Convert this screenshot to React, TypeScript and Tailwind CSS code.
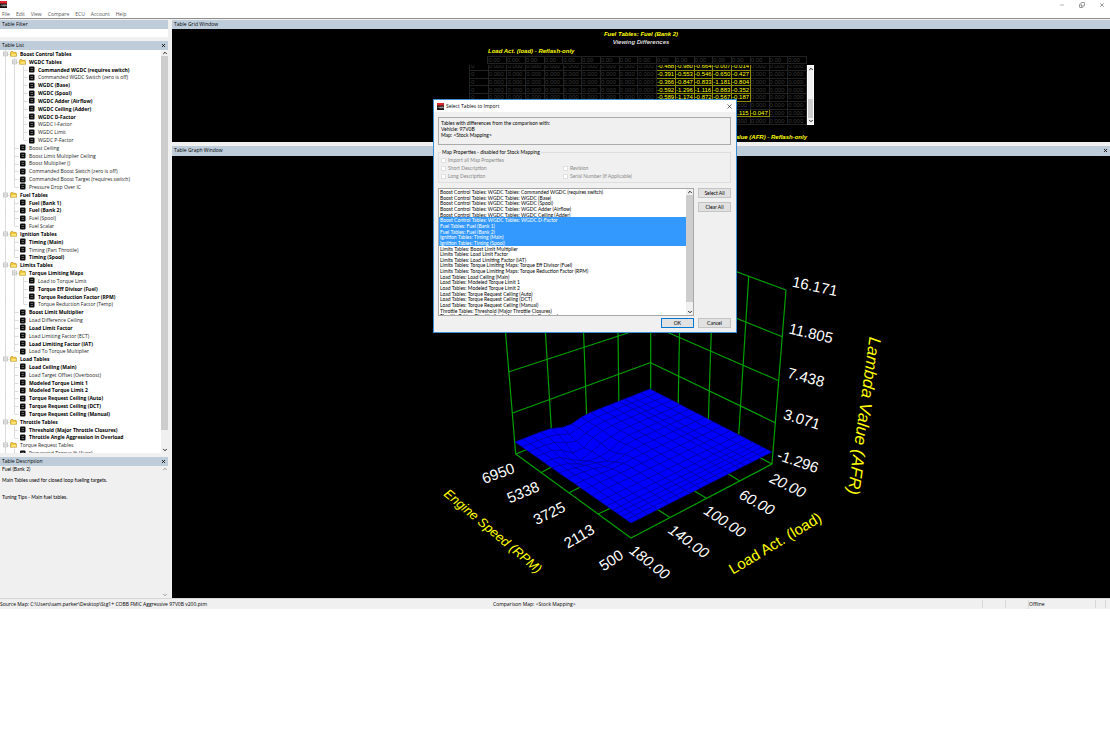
import React, { useState } from 'react';
import { ChevronDown, ChevronUp, Copy, Minus, X } from 'lucide-react';

type TreeRow = { level: number; label: string; bold?: boolean; folder?: boolean };

const folder = (level: number, label: string, bold = true): TreeRow => ({ level, label, bold, folder: true });
const item = (level: number, label: string): TreeRow => ({ level, label });
const changed = (level: number, label: string): TreeRow => ({ level, label, bold: true });

const TREE: TreeRow[] = [
  folder(0, 'Boost Control Tables'),
  folder(1, 'WGDC Tables'),
  changed(2, 'Commanded WGDC (requires switch)'),
  item(2, 'Commanded WGDC Switch (zero is off)'),
  changed(2, 'WGDC (Base)'),
  changed(2, 'WGDC (Spool)'),
  changed(2, 'WGDC Adder (Airflow)'),
  changed(2, 'WGDC Ceiling (Adder)'),
  changed(2, 'WGDC D-Factor'),
  item(2, 'WGDC I-Factor'),
  item(2, 'WGDC Limit'),
  item(2, 'WGDC P-Factor'),
  item(1, 'Boost Ceiling'),
  item(1, 'Boost Limit Multiplier Ceiling'),
  item(1, 'Boost Multiplier ()'),
  item(1, 'Commanded Boost Switch (zero is off)'),
  item(1, 'Commanded Boost Target (requires switch)'),
  item(1, 'Pressure Drop Over IC'),
  folder(0, 'Fuel Tables'),
  changed(1, 'Fuel (Bank 1)'),
  changed(1, 'Fuel (Bank 2)'),
  item(1, 'Fuel (Spool)'),
  item(1, 'Fuel Scalar'),
  folder(0, 'Ignition Tables'),
  changed(1, 'Timing (Main)'),
  item(1, 'Timing (Part Throttle)'),
  changed(1, 'Timing (Spool)'),
  folder(0, 'Limits Tables'),
  folder(1, 'Torque Limiting Maps'),
  item(2, 'Load to Torque Limit'),
  changed(2, 'Torque Eff Divisor (Fuel)'),
  changed(2, 'Torque Reduction Factor (RPM)'),
  item(2, 'Torque Reduction Factor (Temp)'),
  changed(1, 'Boost Limit Multiplier'),
  item(1, 'Load Difference Ceiling'),
  changed(1, 'Load Limit Factor'),
  item(1, 'Load Limiting Factor (ECT)'),
  changed(1, 'Load Limiting Factor (IAT)'),
  item(1, 'Load To Torque Multiplier'),
  folder(0, 'Load Tables'),
  changed(1, 'Load Ceiling (Main)'),
  item(1, 'Load Target Offset (Overboost)'),
  changed(1, 'Modeled Torque Limit 1'),
  changed(1, 'Modeled Torque Limit 2'),
  changed(1, 'Torque Request Ceiling (Auto)'),
  changed(1, 'Torque Request Ceiling (DCT)'),
  changed(1, 'Torque Request Ceiling (Manual)'),
  folder(0, 'Throttle Tables'),
  changed(1, 'Threshold (Major Throttle Closures)'),
  changed(1, 'Throttle Angle Aggression in Overload'),
  folder(0, 'Torque Request Tables', false),
  item(1, 'Requested Torque % (Auto)'),
];

const IMPORT_TABLES = [
  'Boost Control Tables: WGDC Tables: Commanded WGDC (requires switch)',
  'Boost Control Tables: WGDC Tables: WGDC (Base)',
  'Boost Control Tables: WGDC Tables: WGDC (Spool)',
  'Boost Control Tables: WGDC Tables: WGDC Adder (Airflow)',
  'Boost Control Tables: WGDC Tables: WGDC Ceiling (Adder)',
  'Boost Control Tables: WGDC Tables: WGDC D-Factor',
  'Fuel Tables: Fuel (Bank 1)',
  'Fuel Tables: Fuel (Bank 2)',
  'Ignition Tables: Timing (Main)',
  'Ignition Tables: Timing (Spool)',
  'Limits Tables: Boost Limit Multiplier',
  'Limits Tables: Load Limit Factor',
  'Limits Tables: Load Limiting Factor (IAT)',
  'Limits Tables: Torque Limiting Maps: Torque Eff Divisor (Fuel)',
  'Limits Tables: Torque Limiting Maps: Torque Reduction Factor (RPM)',
  'Load Tables: Load Ceiling (Main)',
  'Load Tables: Modeled Torque Limit 1',
  'Load Tables: Modeled Torque Limit 2',
  'Load Tables: Torque Request Ceiling (Auto)',
  'Load Tables: Torque Request Ceiling (DCT)',
  'Load Tables: Torque Request Ceiling (Manual)',
  'Throttle Tables: Threshold (Major Throttle Closures)',
  'Throttle Tables: Throttle Angle Aggression in Overload',
];

const COLUMNS = Array.from({ length: 17 }, (_, i) => i);

// Differences by row, keyed by the first column they start in
const DIFF_ROWS: { start: number; values: string[] }[] = [
  { start: 9, values: ['-0.488', '-0.980', '-0.664', '-0.007', '-0.014'] },
  { start: 9, values: ['-0.391', '-0.553', '-0.546', '-0.650', '-0.427'] },
  { start: 9, values: ['-0.366', '-0.847', '-0.833', '-1.181', '-0.804'] },
  { start: 9, values: ['-0.592', '-1.296', '-1.116', '-0.883', '-0.352'] },
  { start: 9, values: ['-0.589', '-1.174', '-0.872', '-0.567', '-0.187'] },
  { start: 9, values: [] },
  { start: 13, values: ['-1.115', '-0.047'] },
  { start: 9, values: [] },
];

function continues(index: number, level: number) {
  for (let i = index + 1; i < TREE.length; i++) {
    if (TREE[i].level === level) return true;
    if (TREE[i].level < level) return false;
  }
  return level === 0;
}

function AppLogo() {
  return (
    <svg viewBox="0 0 14 14" className="h-[7px] w-[7px] shrink-0" aria-hidden="true">
      <rect width="14" height="14" fill="#1b1414" />
      <rect width="14" height="5" fill="#d9262c" />
      <path d="M2 10V8h2M5 8h2v2H5zM8 7v3h2V8H8M11 7v3h2V8h-2" fill="none" stroke="#e8dada" strokeWidth="0.9" />
    </svg>
  );
}

function FolderIcon() {
  return (
    <svg viewBox="0 0 14 12" className="h-[6px] w-[7px] shrink-0" aria-hidden="true">
      <path d="M1 2.5 2.5 1h3.2L7 2.6h5.2v2H13v6H1z" fill="#f2c230" stroke="#a9801c" />
      <path d="M2.4 9.6 3.4 5.4h9.2l-1 4.2z" fill="#ffe878" />
    </svg>
  );
}

function TableIcon() {
  return (
    <svg viewBox="0 0 14 14" className="h-[7px] w-[7px] shrink-0" aria-hidden="true">
      <rect x="2" y="1" width="11" height="12" rx="2" fill="#0c0c0c" />
      <path d="M5 5h5M5 9h5" stroke="#b4b4b4" strokeWidth="1" />
    </svg>
  );
}

function PanelHeader({ title, closable }: { title: string; closable?: boolean }) {
  return (
    <div className="flex h-[9px] shrink-0 items-center justify-between bg-[#bfcddb] px-[2px] text-[5px] leading-[9px]">
      <h2>{title}</h2>
      {closable && (
        <button type="button" aria-label={`Close ${title}`}>
          <X size={5} strokeWidth={4} />
        </button>
      )}
    </div>
  );
}

function ScrollBar({ className, thumb, faint }: { className?: string; thumb?: string; faint?: boolean }) {
  return (
    <div className={`flex w-[7px] shrink-0 flex-col items-center bg-[#f0f0f0] ${faint ? 'text-[#999]' : 'text-[#222]'} ${className ?? ''}`}>
      <ChevronUp size={6} strokeWidth={4} className="shrink-0" />
      <div className="flex min-h-0 w-full flex-1 flex-col">{thumb && <div className={`w-full bg-[#cdcdcd] ${thumb}`} />}</div>
      <ChevronDown size={6} strokeWidth={4} className="shrink-0" />
    </div>
  );
}

function TreeGuides({ row, index }: { row: TreeRow; index: number }) {
  const levels = Array.from({ length: row.level + 1 }, (_, i) => i);
  return (
    <>
      {levels.map(level => {
        const more = continues(index, level);
        const own = level === row.level;
        return (
          <svg key={level} viewBox="0 0 9 8" preserveAspectRatio="none" className="h-full w-[9px] shrink-0" aria-hidden="true">
            {(more || own) && <path d={more ? 'M4.5 0V8' : 'M4.5 0V4'} stroke="#dadada" />}
            {own && <path d="M4.5 4.5H8.5" stroke="#dadada" />}
            {own && row.folder && (
              <>
                <rect x="2.5" y="2" width="4" height="4" fill="#f4f4f4" stroke="#bcbcbc" strokeWidth="0.8" />
                <path d="M3.3 4h2.4" stroke="#8088a0" strokeWidth="0.6" />
              </>
            )}
          </svg>
        );
      })}
    </>
  );
}

function Sidebar() {
  const [filter, setFilter] = useState('');

  return (
    <aside className="flex w-[168px] shrink-0 flex-col">
      <PanelHeader title="Table Filter" />
      <input
        aria-label="Table Filter"
        value={filter}
        onChange={e => setFilter(e.target.value)}
        className="mb-[4px] h-[8px] w-full bg-white text-[5px] outline-none"
      />
      <PanelHeader title="Table List" closable />
      <div className="flex h-[403px] overflow-hidden bg-white">
        <ul className="grid h-[407px] min-w-0 flex-1 auto-rows-fr pl-[1px]">
          {TREE.map((row, i) => (
            <li key={row.label} className="flex min-h-0 items-center overflow-hidden text-[5px] leading-[8px] whitespace-nowrap">
              <TreeGuides row={row} index={i} />
              {row.folder ? <FolderIcon /> : <TableIcon />}
              <span className={`ml-[3px] ${row.bold ? 'font-bold text-black' : 'text-[#222]'}`}>{row.label}</span>
            </li>
          ))}
        </ul>
        <ScrollBar thumb="h-[374px]" />
      </div>
      <div className="h-[4px]" />
      <PanelHeader title="Table Description" closable />
      <div className="flex h-[132px]">
        <div className="flex-1 pl-[2px] font-[Lato,sans-serif] text-[5px] leading-[6px]">
          <p>Fuel (Bank 2)</p>
          <p className="mt-[5px]">Main Tables used for closed loop fueling targets.</p>
          <p className="mt-[11px]">Tuning Tips - Main fuel tables.</p>
        </div>
        <ScrollBar faint />
      </div>
    </aside>
  );
}

function GridWindow() {
  return (
    <section className="flex flex-col">
      <PanelHeader title="Table Grid Window" />
      <div className="flex h-[113px] flex-col items-center bg-black font-['Liberation_Sans',Arial,sans-serif] text-[6px] leading-[8px]">
        <p className="mt-px font-bold text-[#ffff00] italic">Fuel Tables: Fuel (Bank 2)</p>
        <p className="font-bold text-[#ddd] italic">Viewing Differences</p>
        <div className="w-[348px] pl-[2px]">
          <p className="mt-px pl-[19px] font-bold text-[#ffff00] italic">Load Act. (load) - Reflash-only</p>
          <table className="mt-px w-[338px] table-fixed border-collapse leading-[6px] text-[#383838]">
            <thead>
              <tr>
                <td />
                {COLUMNS.map(c => (
                  <th key={c} className="border border-[#222] p-0 text-left font-normal">
                    0.00
                  </th>
                ))}
              </tr>
            </thead>
          </table>
          <div className="mt-px flex">
            <div className="flex h-[60px] w-[338px] items-end overflow-hidden">
              <table className="h-[63px] w-full table-fixed border-collapse leading-[6px] text-[#383838]">
                <tbody>
                  {DIFF_ROWS.map((row, r) => (
                    <tr key={r}>
                      <th className="border border-[#222] p-0 pl-px text-left font-normal">0</th>
                      {COLUMNS.map(c => {
                        const value = row.values[c - row.start];
                        return (
                          <td key={c} className={`border p-0 ${value ? 'border-[#8c8c00] text-[#ffff00]' : 'border-[#222]'}`}>
                            {value ?? '0.000'}
                          </td>
                        );
                      })}
                    </tr>
                  ))}
                </tbody>
              </table>
            </div>
            <ScrollBar thumb="mt-auto h-[19px]" className="border border-white" />
          </div>
          <p className="mt-[8px] pr-[8px] text-right font-bold text-[#ffff00] italic">Lambda Value (AFR) - Reflash-only</p>
        </div>
      </div>
    </section>
  );
}

type Point = [number, number];

const BACK: Point = [650, 389];
const RIGHT: Point = [772, 452];
const FRONT: Point = [631, 523];
const LEFT: Point = [515, 442];

const RPM_STEPS = [0, 0.06, 0.12, 0.18, 0.25, 0.32, 0.38, 0.45, 0.52, 0.59, 0.66, 0.73, 0.79, 0.84, 0.88, 0.92, 0.96, 1];
const LOAD_STEPS = [0, 0.07, 0.14, 0.19, 0.23, 0.3, 0.37, 0.44, 0.51, 0.58, 0.65, 0.73, 0.81, 0.88, 0.94, 1];

// Hollows in the surface: centre, spread and depth
const DIPS = [
  { x: 567, y: 422, spread: 8, depth: 4 },
  { x: 579, y: 444, spread: 11, depth: 14 },
  { x: 607, y: 450, spread: 10, depth: 9 },
];

function project(u: number, v: number): Point {
  const x = BACK[0] * (1 - u) * (1 - v) + RIGHT[0] * u * (1 - v) + LEFT[0] * (1 - u) * v + FRONT[0] * u * v;
  const y = BACK[1] * (1 - u) * (1 - v) + RIGHT[1] * u * (1 - v) + LEFT[1] * (1 - u) * v + FRONT[1] * u * v;
  const dip = DIPS.reduce((sum, d) => {
    const dist = ((x - d.x) ** 2 + (y - d.y) ** 2) / (2 * d.spread ** 2);
    return sum + d.depth * Math.exp(-dist);
  }, 0);
  return [x, y + dip];
}

const toPoints = (points: Point[]) => points.map(p => `${p[0].toFixed(1)},${p[1].toFixed(1)}`).join(' ');

const SURFACE_EDGE: Point[] = [
  ...RPM_STEPS.map(s => project(s, 0)),
  ...LOAD_STEPS.map(s => project(1, s)),
  ...[...RPM_STEPS].reverse().map(s => project(s, 1)),
  ...[...LOAD_STEPS].reverse().map(s => project(0, s)),
];

const AXIS_LABELS = [
  { text: '16.171', x: 815, y: 286, angle: 12 },
  { text: '11.805', x: 811, y: 333, angle: 13 },
  { text: '7.438', x: 806, y: 377, angle: 15 },
  { text: '3.071', x: 802, y: 419, angle: 17 },
  { text: '-1.296', x: 798, y: 461, angle: 19 },
  { text: '20.00', x: 788, y: 485, angle: 26, slanted: true },
  { text: '60.00', x: 757, y: 502, angle: 29, slanted: true },
  { text: '100.00', x: 725, y: 521, angle: 33, slanted: true },
  { text: '140.00', x: 689, y: 541, angle: 36, slanted: true },
  { text: '180.00', x: 650, y: 562, angle: 38, slanted: true },
  { text: '6950', x: 498, y: 473, angle: -20 },
  { text: '5338', x: 523, y: 492, angle: -23 },
  { text: '3725', x: 549, y: 513, angle: -26 },
  { text: '2113', x: 579, y: 536, angle: -30 },
  { text: '500', x: 611, y: 560, angle: -33 },
];

const AXIS_TITLES = [
  { text: 'Engine Speed (RPM)', x: 493, y: 531, angle: 40, size: 'text-[13px] italic' },
  { text: 'Load Act. (load)', x: 775, y: 543, angle: -31, size: 'text-[15px]' },
  { text: 'Lambda Value (AFR)', x: 864, y: 416, angle: 98, size: 'text-[17px] italic' },
];

function SurfaceChart() {
  return (
    <svg
      viewBox="401 156 480 442"
      className="mx-auto block h-[442px] w-[480px] font-['Liberation_Sans',Arial,sans-serif]"
      role="img"
      aria-label="Fuel (Bank 2) surface"
    >
      <g fill="none" stroke="#00a000" strokeWidth="1.2">
        {/* left wall */}
        <path d="M502 290 515.7 454M542 276 552 440M581 263 587 425M617 251 619 412M650.7 240V400" />
        <path d="M502 290 650.7 240M505 332 650.7 283M508.3 372 650.7 325.5M512 413.3 650.7 362.5M515.7 454 650.7 400" />
        {/* right wall */}
        <path d="M786 290 772 464M748.7 276.7 738 446M713.5 265 708 430M681 252 678 415" />
        <path d="M650.7 240 786 290M650.7 284 782.3 336.7M650.7 325 778.7 380.7M650.7 362.7 775.3 422.7M650.7 400 772 464" />
        {/* floor */}
        <path d="M515.7 454 631 538 772 464" />
        <path d="M541 472.7 562 461M569.3 492.7 590 482M598.3 514 619 504M669.5 517.3 650 504.5M706.5 498.3 686 486M739.3 480.7 719 468" />
      </g>
      <polygon points={toPoints(SURFACE_EDGE)} fill="#0000ff" />
      <g fill="none" stroke="#000090" strokeWidth="0.7">
        {RPM_STEPS.map(u => (
          <polyline key={u} points={toPoints(LOAD_STEPS.map(v => project(u, v)))} />
        ))}
        {LOAD_STEPS.map(v => (
          <polyline key={v} points={toPoints(RPM_STEPS.map(u => project(u, v)))} />
        ))}
      </g>
      {AXIS_LABELS.map(l => (
        <text
          key={l.text}
          transform={`translate(${l.x} ${l.y}) rotate(${l.angle})`}
          textAnchor="middle"
          dominantBaseline="central"
          className={`fill-white text-[15px] ${l.slanted ? 'italic' : ''}`}
        >
          {l.text}
        </text>
      ))}
      {AXIS_TITLES.map(l => (
        <text
          key={l.text}
          transform={`translate(${l.x} ${l.y}) rotate(${l.angle})`}
          textAnchor="middle"
          dominantBaseline="central"
          className={`fill-[#ffff00] ${l.size}`}
        >
          {l.text}
        </text>
      ))}
    </svg>
  );
}

function ImportOption({ label }: { label: string }) {
  return (
    <label className="flex h-[8px] items-center gap-[2px] text-[#8a8a8a]">
      <input type="checkbox" disabled className="h-[5px] w-[5px] appearance-none border border-[#e0e0e0] bg-white" />
      {label}
    </label>
  );
}

function DialogButton({ children, primary, onClick }: { children: React.ReactNode; primary?: boolean; onClick?: () => void }) {
  return (
    <button
      type="button"
      onClick={onClick}
      className={`h-[10px] w-[33px] border bg-[#e1e1e1] text-center leading-[8px] ${primary ? 'border-[#0078d7]' : 'border-[#c4c4c4]'}`}
    >
      {children}
    </button>
  );
}

function ImportDialog() {
  const [selected, setSelected] = useState<number[]>([5, 6, 7, 8, 9]);

  const toggle = (index: number) => {
    setSelected(current => (current.includes(index) ? current.filter(i => i !== index) : [...current, index]));
  };

  return (
    <div
      role="dialog"
      aria-label="Select Tables to Import"
      className="absolute top-[99px] left-[433px] w-[304px] border border-[#3b8fd6] bg-[#f0f0f0] font-[Lato,sans-serif] text-[5px] leading-[6px] text-black"
    >
      <div className="flex h-[12px] items-center gap-[2px] bg-white px-[3px] font-['Open_Sans','Noto_Sans',sans-serif]">
        <AppLogo />
        <h1 className="flex-1">Select Tables to Import</h1>
        <button type="button" aria-label="Close">
          <X size={7} strokeWidth={2} />
        </button>
      </div>
      <div className="pt-[5px] pr-[5px] pb-[4px] pl-[4px]">
        <div className="h-[28px] border border-[#ababab] px-[2px] pt-[2px]">
          <p>Tables with differences from the comparison with:</p>
          <p>Vehicle: 97V0B</p>
          <p>Map: &lt;Stock Mapping&gt;</p>
        </div>
        <fieldset className="mt-[4px] h-[34px] border border-[#dedede] px-[2px]">
          <legend className="px-px">Map Properties - disabled for Stock Mapping</legend>
          <div className="grid grid-cols-[122px_1fr] pt-px">
            <div className="col-span-2">
              <ImportOption label="Import all Map Properties" />
            </div>
            <ImportOption label="Short Description" />
            <ImportOption label="Revision" />
            <ImportOption label="Long Description" />
            <ImportOption label="Serial Number (If Applicable)" />
          </div>
        </fieldset>
        <div className="mt-[5px] flex gap-[4px]">
          <div className="flex h-[128px] flex-1 overflow-hidden border border-[#a8a8a8] bg-white">
            <ul role="listbox" aria-multiselectable="true" className="grid h-[130px] flex-1 auto-rows-fr">
              {IMPORT_TABLES.map((label, i) => (
                <li
                  key={label}
                  role="option"
                  aria-selected={selected.includes(i)}
                  onClick={() => toggle(i)}
                  className={`min-h-0 pl-px whitespace-nowrap ${selected.includes(i) ? 'bg-[#3399ff] text-white' : ''}`}
                >
                  {label}
                </li>
              ))}
            </ul>
            <ScrollBar thumb="h-[107px]" />
          </div>
          <div className="flex flex-col gap-[4px]">
            <DialogButton onClick={() => setSelected(IMPORT_TABLES.map((_, i) => i))}>Select All</DialogButton>
            <DialogButton onClick={() => setSelected([])}>Clear All</DialogButton>
          </div>
        </div>
        <div className="mt-[2px] flex justify-end gap-[4px]">
          <DialogButton primary>OK</DialogButton>
          <DialogButton>Cancel</DialogButton>
        </div>
      </div>
    </div>
  );
}

export default function App() {
  return (
    <div className="relative min-h-screen bg-white font-['Open_Sans','Noto_Sans',sans-serif] text-black">
      <header className="border-b border-[#8e8e8e]">
        <div className="flex h-[9px] items-center justify-between">
          <AppLogo />
          <div className="flex gap-[14px] pr-[5px] text-[#777]">
            <button type="button" aria-label="Minimize">
              <Minus size={6} strokeWidth={2} />
            </button>
            <button type="button" aria-label="Restore">
              <Copy size={6} strokeWidth={3} className="-scale-x-100 rotate-180" />
            </button>
            <button type="button" aria-label="Close">
              <X size={6} strokeWidth={3} />
            </button>
          </div>
        </div>
        <nav className="flex h-[9px] items-end gap-[6px] pl-[2px] text-[5px] leading-[8px] text-[#555]">
          {['File', 'Edit', 'View', 'Compare', 'ECU', 'Account', 'Help'].map(name => (
            <button key={name} type="button">
              {name}
            </button>
          ))}
        </nav>
      </header>

      <div className="flex gap-[4px] bg-[#f0f0f0] pt-px">
        <Sidebar />
        <main className="min-w-0 flex-1">
          <GridWindow />
          <div className="h-[4px]" />
          <section>
            <PanelHeader title="Table Graph Window" closable />
            <div className="overflow-hidden border-t border-[#bfcddb] bg-black">
              <SurfaceChart />
            </div>
          </section>
        </main>
      </div>

      <footer className="flex h-[11px] items-center border-t border-[#d8d8d8] bg-[#f0f0f0] text-[5px] leading-[9px]">
        <span className="w-[493px]">Source Map: C:\Users\sam.parker\Desktop\Stg1+ COBB FMIC Aggressive 97V0B v200.ptm</span>
        <span className="flex-1">Comparison Map: &lt;Stock Mapping&gt;</span>
        <span className="h-[8px] w-[23px] border-l border-[#d9d9d9]" />
        <span className="h-[8px] w-[23px] border-l border-[#d9d9d9]" />
        <span className="w-[67px] border-l border-[#d9d9d9]">Offline</span>
        <span className="h-[8px] w-[10px] border-l border-[#d9d9d9]" />
        <span className="h-[8px] w-[5px] border-l border-[#d9d9d9]" />
      </footer>

      <ImportDialog />
    </div>
  );
}
